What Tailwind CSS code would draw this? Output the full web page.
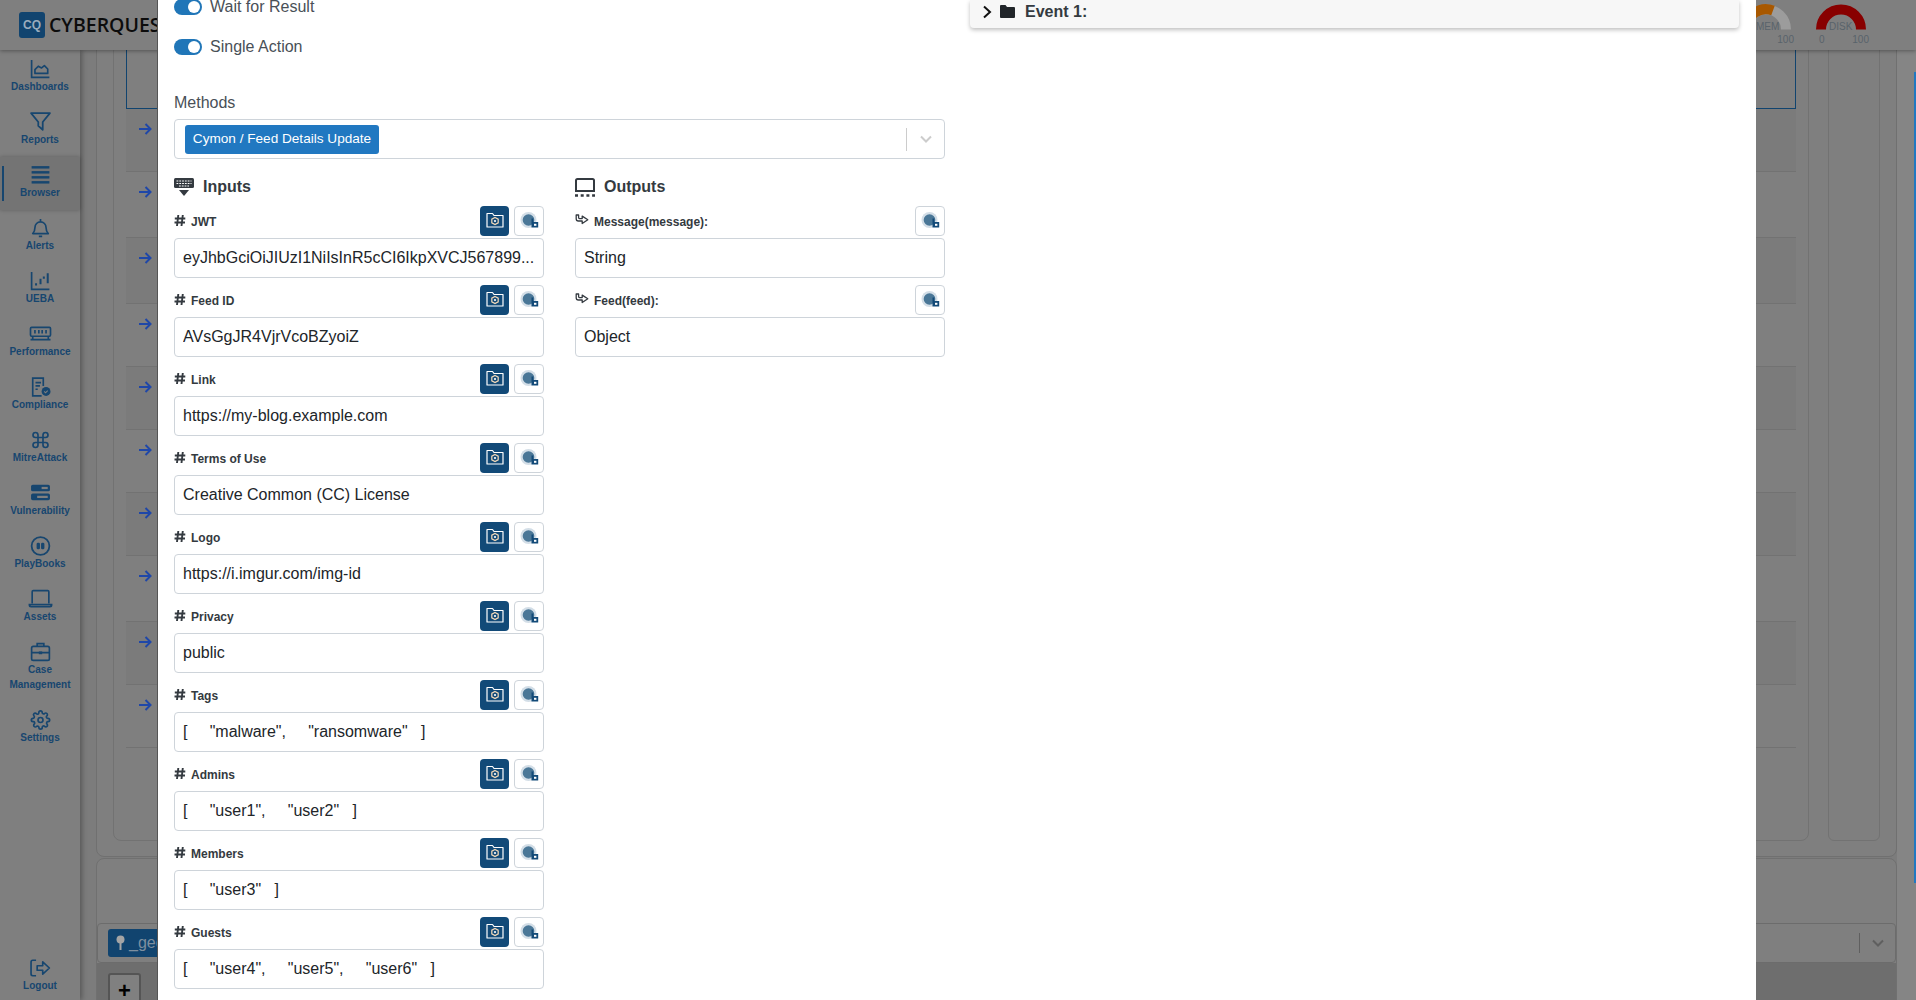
<!DOCTYPE html>
<html lang="en">
<head>
    <meta charset="UTF-8">
    <title>Playbook Action</title>
    <script src="https://cdn.jsdelivr.net/npm/@tailwindcss/browser@4"></script>
</head>
<body class="font-['Liberation_Sans',sans-serif] overflow-hidden bg-[#7f7f7f]">

    <!-- Shared icons -->
    <svg class="hidden">
        <symbol id="i-folder" viewBox="0 0 20 20">
            <path d="M2 3.500h5.500l1.500 2h9v11.500H2z" fill="none" stroke="#fff" stroke-width="1.200" stroke-linejoin="round"/>
            <path d="M10 7.400l3.200 1.800v3.600L10 14.600l-3.200-1.800V9.200z" fill="none" stroke="#f4d9b8" stroke-width="1.200"/>
            <circle cx="10" cy="11" r="1.100" fill="#fff"/>
        </symbol>
        <symbol id="i-hand" viewBox="0 0 20 20">
            <circle cx="8.500" cy="9" r="8" fill="#d3dee7"/>
            <circle cx="8.500" cy="9" r="5.800" fill="#4a7797"/>
            <path d="M11.500 7.500h1.800v3.500h4.900v5.500h-6.700z" fill="#124a78"/>
            <rect x="14" y="12.800" width="2.400" height="2" fill="#fff"/>
        </symbol>
        <symbol id="i-hash" viewBox="0 0 12 12">
            <path d="M4.300 .5L3 11.500M8.800 .5L7.500 11.500M.8 4h10.500M.5 8h10.500" fill="none" stroke="#343a40" stroke-width="1.900"/>
        </symbol>
        <symbol id="i-reply" viewBox="0 0 14 12">
            <path d="M1.200 1v3.800q0 2.200 2.200 2.200h3.800v2.500l5.600-3.700-5.600-3.700v2.500H4.500q-.9 0-.9-1V1z" fill="none" stroke="#343a40" stroke-width="1.300" stroke-linejoin="round"/>
        </symbol>
        <symbol id="i-arrow" viewBox="0 0 14 14">
            <path d="M1 7h11.500M7.500 2l5 5-5 5" fill="none" stroke="#1f47a8" stroke-width="2"/>
        </symbol>
    </svg>

    <!-- Page behind the dialog -->
    <div class="h-screen flex flex-col">
        <header class="relative z-20 h-[50px] shrink-0 flex items-center bg-[#7f7f7f] shadow-[0_1px_4px_rgba(0,0,0,0.35)] pl-[19px] pr-[50px]">
            <div class="w-[26px] h-[26px] rounded-[3px] bg-[#11446f] flex items-center justify-center text-[#9aacbd] text-[12px] font-bold">CQ</div>
            <span class="ml-[4px] text-[19.500px] font-['Open_Sans'] font-semibold text-[#0c0c0c]">CYBERQUEST</span>
            <div class="ml-auto flex gap-[25px]">
                <div class="relative w-[50px] h-[50px]">
                    <svg class="w-[50px] h-[30px]" viewBox="0 0 50 30" fill="none" stroke-width="10"><path d="M5 29.500a20 20 0 0 1 40 0" stroke="#9c9c9c"/><path d="M5 29.500a20 20 0 0 1 27-19" stroke="#a85800"/></svg>
                    <span class="absolute left-[15px] top-[19px] text-[10px] text-[#59636b]">MEM</span>
                    <span class="absolute right-[-3px] top-[32px] text-[10px] text-[#59636b]">100</span>
                </div>
                <div class="relative w-[50px] h-[50px]">
                    <svg class="w-[50px] h-[30px]" viewBox="0 0 50 30" fill="none" stroke-width="10"><path d="M5 29.500a20 20 0 0 1 40 0" stroke="#880000"/></svg>
                    <span class="absolute left-[13px] top-[19px] text-[10px] text-[#59636b]">DISK</span>
                    <span class="absolute left-[3px] top-[32px] text-[10px] text-[#59636b]">0</span>
                    <span class="absolute right-[-3px] top-[32px] text-[10px] text-[#59636b]">100</span>
                </div>
            </div>
        </header>

        <div class="flex flex-1 min-h-0">
            <aside class="relative z-10 w-20 shrink-0 flex flex-col pt-[3px] bg-[#7f7f7f] shadow-[2px_0_5px_rgba(0,0,0,0.3)] text-[#17466f] text-[10px] leading-[15px] font-bold text-center">
                <a class="h-[53px] pt-[6px] flex flex-col items-center">
                    <svg class="w-[23px] h-5" viewBox="0 0 20 18" fill="none" stroke="currentColor" stroke-width="1.500"><path d="M2 1v15.500h16"/><path d="M5 13V9.500l3-3 3 1.500 2.500-2 3 3V13z" stroke-linejoin="round"/></svg>
                    Dashboards
                </a>
                <a class="h-[53px] pt-[6px] flex flex-col items-center">
                    <svg class="w-[23px] h-5" viewBox="0 0 20 18" fill="none" stroke="currentColor" stroke-width="1.600"><path d="M1.500 1.500h17l-6.500 8v7l-4-3.500V9.500z" stroke-linejoin="round" transform="translate(0 -.5)"/></svg>
                    Reports
                </a>
                <a class="relative h-[53px] -mt-[2px] mb-[2px] pt-[8px] flex flex-col items-center bg-[#747474] shadow-[0_0_4px_rgba(0,0,0,0.25)]">
                    <span class="absolute left-[2px] top-[9px] w-[2px] h-[35px] bg-[#17466f]"></span>
                    <svg class="w-[23px] h-5" viewBox="0 0 20 18" fill="currentColor"><rect x="2" y="1" width="16" height="2.200"/><rect x="2" y="5.500" width="16" height="2.200"/><rect x="2" y="10" width="16" height="2.200"/><rect x="2" y="14.500" width="16" height="2.200"/></svg>
                    Browser
                </a>
                <a class="h-[53px] pt-[6px] flex flex-col items-center">
                    <svg class="w-[23px] h-5" viewBox="0 0 20 18" fill="none" stroke="currentColor" stroke-width="1.500"><path d="M3 14c1.500-1.500 2-2.500 2-5.500a5 5 0 0 1 10 0c0 3 .5 4 2 5.500z" stroke-linejoin="round"/><path d="M8.500 16.500h3M10 1v2"/></svg>
                    Alerts
                </a>
                <a class="h-[53px] pt-[6px] flex flex-col items-center">
                    <svg class="w-[23px] h-5" viewBox="0 0 20 18" fill="none" stroke="currentColor" stroke-width="1.500"><path d="M2 1v15.500h16"/><path d="M6 11v2M10 7v5M13 5v2M16.500 2v9" stroke-width="1.800"/></svg>
                    UEBA
                </a>
                <a class="h-[53px] pt-[6px] flex flex-col items-center">
                    <svg class="w-[23px] h-5" viewBox="0 0 20 18" fill="none" stroke="currentColor" stroke-width="1.500"><rect x="1" y="3" width="18" height="8" rx="1"/><path d="M5 5.500v3M8.500 5.500v3M11.500 5.500v3M15 5.500v3M1 14h18M3 11v3M17 11v3" /></svg>
                    Performance
                </a>
                <a class="h-[53px] pt-[6px] flex flex-col items-center">
                    <svg class="w-[23px] h-5" viewBox="0 0 20 18" fill="none" stroke="currentColor" stroke-width="1.500"><path d="M11 17H3V1h9.500v7"/><path d="M5.500 5h5M5.500 8h4M5.500 11h2"/><circle cx="15" cy="13" r="4" fill="currentColor" stroke="none"/><path d="M13.300 13l1.200 1.200 2-2" stroke="#7f7f7f" stroke-width="1"/></svg>
                    Compliance
                </a>
                <a class="h-[53px] pt-[6px] flex flex-col items-center">
                    <svg class="w-[23px] h-5" viewBox="0 0 24 24" fill="none" stroke="currentColor" stroke-width="2"><path d="M18 3a3 3 0 0 0-3 3v12a3 3 0 0 0 3 3 3 3 0 0 0 3-3 3 3 0 0 0-3-3H6a3 3 0 0 0-3 3 3 3 0 0 0 3 3 3 3 0 0 0 3-3V6a3 3 0 0 0-3-3 3 3 0 0 0-3 3 3 3 0 0 0 3 3h12a3 3 0 0 0 3-3 3 3 0 0 0-3-3z"/></svg>
                    MitreAttack
                </a>
                <a class="h-[53px] pt-[6px] flex flex-col items-center">
                    <svg class="w-[23px] h-5" viewBox="0 0 20 18" fill="currentColor"><rect x="1.500" y="1.500" width="17" height="6" rx="1.500"/><rect x="1.500" y="9.500" width="17" height="6" rx="1.500"/><rect x="11" y="3.500" width="5.500" height="2" fill="#7f7f7f"/><rect x="7" y="11.500" width="9.500" height="2" fill="#7f7f7f"/></svg>
                    Vulnerability
                </a>
                <a class="h-[53px] pt-[6px] flex flex-col items-center">
                    <svg class="w-[23px] h-5" viewBox="0 0 20 18" fill="none" stroke="currentColor" stroke-width="1.600"><circle cx="10" cy="9" r="8"/><rect x="6.500" y="6" width="3" height="6" rx="1.200" fill="currentColor" stroke="none"/><rect x="10.500" y="6" width="3" height="6" rx="1.200" fill="currentColor" stroke="none"/></svg>
                    PlayBooks
                </a>
                <a class="h-[53px] pt-[6px] flex flex-col items-center">
                    <svg class="w-[25px] h-5" viewBox="0 0 22 18" fill="none" stroke="currentColor" stroke-width="1.500"><path d="M3.500 13V2.500q0-1 1-1h13q1 0 1 1V13"/><path d="M1 14h20v.5q0 1.500-1.500 1.500h-17Q1 16 1 14.500z"/></svg>
                    Assets
                </a>
                <a class="h-[68px] pt-[6px] flex flex-col items-center">
                    <svg class="w-[23px] h-5" viewBox="0 0 20 18" fill="none" stroke="currentColor" stroke-width="1.500"><rect x="2" y="4" width="16" height="12.500" rx="1.500"/><path d="M7 4V1.500h6V4M2 9.500h16"/><rect x="8.500" y="8.500" width="3" height="2.500" fill="currentColor" stroke="none"/></svg>
                    <span>Case<br>Management</span>
                </a>
                <a class="h-[53px] pt-[6px] flex flex-col items-center">
                    <svg class="w-[23px] h-5" viewBox="0 0 24 24" fill="none" stroke="currentColor" stroke-width="2"><circle cx="12" cy="12" r="3"/><path d="M19.400 15a1.650 1.650 0 0 0 .33 1.820l.06.06a2 2 0 1 1-2.830 2.830l-.06-.06a1.650 1.650 0 0 0-2.800 1.170V21a2 2 0 1 1-4 0v-.09A1.650 1.650 0 0 0 7.300 19.740l-.06.06a2 2 0 1 1-2.830-2.830l.06-.06A1.650 1.650 0 0 0 3.300 14H3a2 2 0 1 1 0-4h.09A1.650 1.650 0 0 0 4.260 7.300l-.06-.06a2 2 0 1 1 2.830-2.830l.06.06A1.650 1.650 0 0 0 10 3.300V3a2 2 0 1 1 4 0v.09a1.650 1.650 0 0 0 2.800 1.170l.06-.06a2 2 0 1 1 2.830 2.830l-.06.06A1.650 1.650 0 0 0 20.700 10H21a2 2 0 1 1 0 4h-.09a1.650 1.650 0 0 0-1.510 1z"/></svg>
                    Settings
                </a>
                <a class="mt-auto h-[48px] pt-[6px] flex flex-col items-center">
                    <svg class="w-[23px] h-5" viewBox="0 0 20 18" fill="none" stroke="currentColor" stroke-width="1.500"><path d="M6 2H3q-1.500 0-1.500 1.500v11Q1.500 16 3 16h3"/><path d="M7 7h5V3.500L18 9l-6 5.500V11H7z" stroke-linejoin="round"/></svg>
                    Logout
                </a>
            </aside>

            <main class="relative flex flex-1 min-w-0 bg-[#7c7c7c]">
                <div class="flex-1 min-w-0 flex flex-col pl-4">
                    <section class="h-[815px] -mt-2 shrink-0 flex gap-[19px] pl-4 pr-4 border border-[#707070] rounded-[8px] bg-[#7f7f7f]">
                        <div class="w-[1696px] h-[798px] border border-[#727272] rounded-[8px] overflow-hidden pl-[12px] pr-[12px]">
                            <div class="h-[65px] border border-[#11446f]"></div>
                            <div id="rows"></div>
                        </div>
                        <div class="w-[52px] h-[798px] border border-[#727272] rounded-[6px]"></div>
                    </section>
                    <section class="flex-1 mt-px flex flex-col border border-[#707070] rounded-t-[8px] bg-[#7f7f7f]">
                        <div class="mt-[64px] h-[40px] shrink-0 flex items-center pl-[10px] pr-[9px] border border-[#6c6c6c] rounded-[4px]">
                            <div class="w-[160px] h-[28px] rounded-[3px] bg-[#11446f] flex items-center pl-[8px] gap-[4px] text-[16px] text-[#7e8f9f]">
                                <svg class="w-[9px] h-[16px]" viewBox="0 0 9 16" fill="#a5a5a5"><circle cx="4.500" cy="4.500" r="4"/><rect x="3.500" y="8" width="2" height="7"/></svg>
                                _geo
                            </div>
                            <span class="ml-auto w-px h-[20px] bg-[#5f5f5f]"></span>
                            <svg class="ml-[12px] mr-[2px] w-[12px] h-[8px]" viewBox="0 0 12 8" fill="none" stroke="#5f5f5f" stroke-width="2"><path d="M1 1.500l5 5 5-5"/></svg>
                        </div>
                        <div class="flex-1 bg-[#6e6e6e] pl-[11px] pt-[10px]">
                            <div class="w-[33px] h-[40px] bg-[#808080] border-2 border-[#555] rounded-[3px] text-black text-[22px] leading-[32px] font-bold text-center">+</div>
                        </div>
                    </section>
                </div>
                <div class="relative w-[19px] shrink-0 bg-[#858585]">
                    <div class="absolute right-0 top-[22px] w-[2px] h-[811px] bg-[#2178c1]"></div>
                </div>
            </main>
        </div>
    </div>

    <!-- Dialog -->
    <div class="fixed z-30 top-0 bottom-0 left-[157px] w-[1599px] bg-white border-l border-[#555] overflow-hidden flex pl-[16px]">
        <div class="w-[771px] shrink-0">
            <div class="-mt-px flex items-center h-4 mb-6 gap-2 text-[#495057]">
                <span class="w-7 h-4 rounded-full bg-[#2076b8] flex items-center justify-end pr-[2px]"><span class="w-3 h-3 rounded-full bg-white"></span></span>
                Wait for Result
            </div>
            <div class="flex items-center h-4 mb-[36px] gap-2 text-[#495057]">
                <span class="w-7 h-4 rounded-full bg-[#2076b8] flex items-center justify-end pr-[2px]"><span class="w-3 h-3 rounded-full bg-white"></span></span>
                Single Action
            </div>

            <label class="block leading-6 mb-[4px] text-[#495057]">Methods</label>
            <div class="h-[40px] flex items-center pl-[10px] border border-[#ced4da] rounded-[4px]">
                <span class="h-[29px] w-[194px] flex items-center justify-center rounded-[3px] bg-[#2178c1] text-white text-[13.600px]">Cymon / Feed Details Update</span>
                <span class="ml-auto w-px h-[23px] bg-[#ccc]"></span>
                <svg class="ml-[13px] mr-[12px] w-[12px] h-[8px]" viewBox="0 0 12 8" fill="none" stroke="#ccc" stroke-width="2"><path d="M1 1.500l5 5 5-5"/></svg>
            </div>

            <div class="mt-[18px] flex gap-[31px]">
                <div class="w-[370px]">
                    <h3 class="h-5 mb-[9px] flex items-center gap-[9px] font-bold text-[#343a40] leading-5">
                        <svg class="w-5 h-[19px]" viewBox="0 0 20 19"><path d="M1.500 0h17q1.500 0 1.500 1.500v7q0 1.500-1.500 1.500h-17Q0 10 0 8.500v-7Q0 0 1.500 0z" fill="#343a40"/><path d="M2.500 3h15M2.500 5.500h15M5 8h10" stroke="#fff" stroke-width="1.200" stroke-dasharray="1.800 1"/><path d="M5 12h10l-5 6z" fill="#343a40"/></svg>
                        Inputs
                    </h3>
                    <div id="inputs"></div>
                </div>
                <div class="w-[370px]">
                    <h3 class="h-5 mb-[9px] flex items-center gap-[9px] font-bold text-[#343a40] leading-5">
                        <svg class="w-5 h-[19px]" viewBox="0 0 20 19" fill="none"><path d="M1 13V2.500Q1 1 2.500 1h15Q19 1 19 2.500V13z" stroke="#343a40" stroke-width="2"/><path d="M0 17.500h20" stroke="#343a40" stroke-width="2.500" stroke-dasharray="3 2.700"/></svg>
                        Outputs
                    </h3>
                    <div id="outputs"></div>
                </div>
            </div>
        </div>

        <div class="ml-[25px] w-[769px] h-[28px] pb-[5px] rounded-b-[4px] bg-[#f7f7f7] shadow-[0_2px_4px_rgba(0,0,0,0.25)] flex items-center pl-[12px] font-bold text-[#343a40]">
            <svg class="w-[10px] h-[14px]" viewBox="0 0 10 14" fill="none" stroke="#111" stroke-width="2"><path d="M2 1.500L8 7l-6 5.500"/></svg>
            <svg class="ml-[8px] w-[15px] h-[13px]" viewBox="0 0 15 13" fill="#212529"><path d="M1 0h4.500L7 2h7q1 0 1 1v9q0 1-1 1H1q-1 0-1-1V1q0-1 1-1z"/></svg>
            <span class="ml-[10px]">Event 1:</span>
        </div>
    </div>

    <script>
        const inputs = [
            ['JWT', 'eyJhbGciOiJIUzI1NiIsInR5cCI6IkpXVCJ567899...'],
            ['Feed ID', 'AVsGgJR4VjrVcoBZyoiZ'],
            ['Link', 'https://my-blog.example.com'],
            ['Terms of Use', 'Creative Common (CC) License'],
            ['Logo', 'https://i.imgur.com/img-id'],
            ['Privacy', 'public'],
            ['Tags', '[     "malware",     "ransomware"   ]'],
            ['Admins', '[     "user1",     "user2"   ]'],
            ['Members', '[     "user3"   ]'],
            ['Guests', '[     "user4",     "user5",     "user6"   ]']
        ];
        const outputs = [['Message(message):', 'String'], ['Feed(feed):', 'Object']];

        const handBtn = `<button class="w-[30px] h-[30px] flex items-center justify-center border border-[#ced4da] rounded-[4px] bg-white"><svg class="w-5 h-5 ml-[2px]"><use href="#i-hand"/></svg></button>`;
        const folderBtn = `<button class="w-[29px] h-[30px] flex items-center justify-center rounded-[4px] bg-[#124a78]"><svg class="w-5 h-5 -mt-[2px]"><use href="#i-folder"/></svg></button>`;
        const inputBox = `<input class="block mt-[2px] mb-[7px] w-full h-[40px] px-[8px] border border-[#ced4da] rounded-[4px] text-[#212529] bg-white" readonly>`;

        document.getElementById('inputs').innerHTML = inputs.map(f => `
            <div class="h-[30px] flex items-center text-[12px] font-bold text-[#343a40]">
                <svg class="w-[12px] h-[13px] -mt-[2px]"><use href="#i-hash"/></svg>
                <span class="ml-[5px] mt-[2px]">${f[0]}</span>
                <div class="ml-auto flex gap-[5px]">${folderBtn}${handBtn}</div>
            </div>${inputBox}`).join('');

        document.getElementById('outputs').innerHTML = outputs.map(f => `
            <div class="h-[30px] flex items-center text-[12px] font-bold text-[#343a40]">
                <svg class="w-[14px] h-3 -mt-[2px]"><use href="#i-reply"/></svg>
                <span class="ml-[5px] mt-[2px]">${f[0]}</span>
                <div class="ml-auto flex">${handBtn}</div>
            </div>${inputBox}`).join('');

        document.querySelectorAll('#inputs input').forEach((el, i) => el.value = inputs[i][1]);
        document.querySelectorAll('#outputs input').forEach((el, i) => el.value = outputs[i][1]);

        // Rows of the table behind the dialog
        const heights = ['h-[63px]', 'h-[66px]', 'h-[66px]', 'h-[63px]', 'h-[63px]', 'h-[63px]', 'h-[63px]', 'h-[66px]', 'h-[63px]', 'h-[63px]'];
        document.getElementById('rows').innerHTML = heights.map((h, i) => `
            <div class="${h} pl-[12px] pt-[13px] border-b border-[#727272] ${i % 2 == 0 ? 'bg-[#7b7b7b]' : ''}">
                <svg class="w-[14px] h-[14px]"><use href="#i-arrow"/></svg>
            </div>`).join('');
    </script>
</body>
</html>
